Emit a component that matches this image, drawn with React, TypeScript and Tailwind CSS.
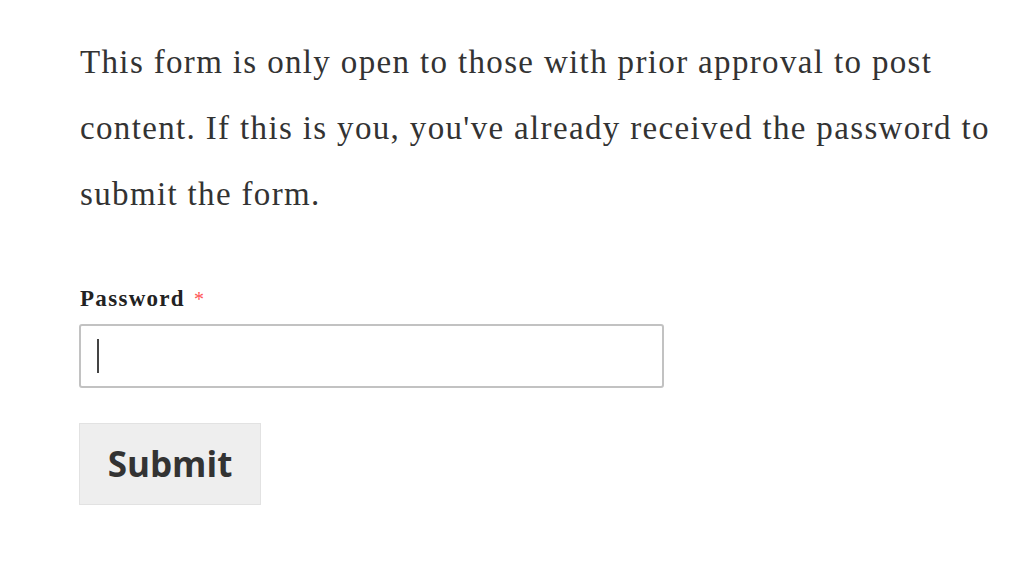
export default function App() {
  return (
    <div className="min-h-screen bg-white pl-[80px] pt-[29px] font-['Liberation_Serif',serif] text-[#333]">
      {/* Intro copy */}
      <p className="w-[930px] text-[33px] leading-[66px] tracking-[1.35px] text-[#333]">
        This form is only open to those with prior approval to post
        <br />
        content. If this is you, you've already received the password to
        <br />
        submit the form.
      </p>

      <form className="-ml-px mt-[60px]" onSubmit={(e) => e.preventDefault()}>
        <label className="ml-px flex items-baseline text-[23px] font-bold leading-[24px] tracking-[1.3px] text-[#222]">
          Password
          <span className="ml-[9px] text-[20px] font-normal text-[#f55]">*</span>
        </label>

        <div className="mt-[13px] flex h-[64px] w-[585px] items-center rounded-[3px] border-2 border-[#c2c2c2] bg-white px-[16px]">
          <span className="h-[34px] w-[2px] bg-[#444]" />
        </div>

        <button
          type="submit"
          className="mt-[35px] h-[82px] w-[182px] border border-[#e2e2e2] bg-[#eeeeee] font-['Open_Sans',sans-serif] text-[35px] font-bold text-[#333]"
        >
          Submit
        </button>
      </form>
    </div>
  )
}
